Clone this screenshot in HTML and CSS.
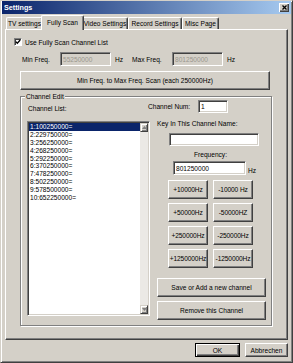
FILE: index.html
```html
<!DOCTYPE html>
<html lang="en">
  <head>
    <meta charset="utf-8" />
    <title>Settings</title>
    <meta name="viewport" content="width=device-width, initial-scale=1" />
    <link rel="stylesheet" href="styles.css">
  </head>
  <body>
    <div class="window">
      <div class="titlebar">
        <span class="title">Settings</span>
        <span class="close">
          <svg width="5" height="5" viewBox="0 0 5 5"><path d="M0.5 0.5 L4.5 4.5 M4.5 0.5 L0.5 4.5" stroke="#000" stroke-width="1.3"/></svg>
        </span>
      </div>

      <div class="tabs">
        <div class="tab tab-tv">TV settings</div>
        <div class="tab tab-scan active">Fully Scan</div>
        <div class="tab tab-video">Video Settings</div>
        <div class="tab tab-record">Record Settings</div>
        <div class="tab tab-misc">Misc Page</div>
      </div>

      <div class="panel">
        <div class="check-row">
          <span class="checkbox">
            <svg width="6" height="6" viewBox="0 0 6 6"><path d="M0.8 2.6 L2.3 4.2 L5.2 1" fill="none" stroke="#000" stroke-width="1.3"/></svg>
          </span>
          <span class="check-label">Use Fully Scan Channel List</span>
        </div>

        <div class="freq-row">
          <span class="freq-label">Min Freq.</span>
          <input class="field disabled min-input" type="text" value="55250000" disabled />
          <span class="hz">Hz</span>
          <span class="freq-label max-label">Max Freq.</span>
          <input class="field disabled max-input" type="text" value="801250000" disabled />
          <span class="hz">Hz</span>
        </div>

        <button class="btn scan-btn">Min Freq. to Max Freq. Scan (each 250000Hz)</button>

        <div class="group">
          <span class="legend">Channel Edit</span>

          <div class="list-col">
            <div class="list-label">Channel List:</div>
            <div class="listbox">
              <div class="items">
                <div class="item selected">1:100250000=</div>
                <div class="item">2:229750000=</div>
                <div class="item">3:256250000=</div>
                <div class="item">4:268250000=</div>
                <div class="item">5:292250000=</div>
                <div class="item">6:370250000=</div>
                <div class="item">7:478250000=</div>
                <div class="item">8:502250000=</div>
                <div class="item">9:578500000=</div>
                <div class="item">10:652250000=</div>
              </div>
              <div class="scrollbar">
                <span class="arrow">
                  <svg width="5" height="3" viewBox="0 0 5 3"><path d="M2.5 0 L5 3 L0 3 Z" fill="#808080"/></svg>
                </span>
                <span class="track"></span>
                <span class="arrow">
                  <svg width="5" height="3" viewBox="0 0 5 3"><path d="M0 0 L5 0 L2.5 3 Z" fill="#808080"/></svg>
                </span>
              </div>
            </div>
          </div>

          <div class="edit-col">
            <div class="num-row">
              <span class="num-label">Channel Num:</span>
              <input class="field num-input" type="text" value="1" />
            </div>
            <div class="name-label">Key In This Channel Name:</div>
            <input class="field name-input" type="text" value="" />
            <div class="freq-title">Frequency:</div>
            <div class="value-row">
              <input class="field value-input" type="text" value="801250000" />
              <span class="value-hz">Hz</span>
            </div>
            <div class="step-grid">
              <button class="btn step">+10000Hz</button>
              <button class="btn step">-10000 Hz</button>
              <button class="btn step">+50000Hz</button>
              <button class="btn step">-50000HZ</button>
              <button class="btn step">+250000Hz</button>
              <button class="btn step">-250000Hz</button>
              <button class="btn step">+1250000Hz</button>
              <button class="btn step">-1250000Hz</button>
            </div>
            <button class="btn wide save-btn">Save or Add a new channel</button>
            <button class="btn wide remove-btn">Remove this Channel</button>
          </div>
        </div>
      </div>

      <div class="footer">
        <button class="btn default ok-btn">OK</button>
        <button class="btn cancel-btn">Abbrechen</button>
      </div>
    </div>
  </body>
</html>
```

FILE: styles.css
```css
* {
  box-sizing: border-box;
}
body {
  margin: 0;
  background: #d4d0c8;
  font-family: 'Liberation Sans', Arial, sans-serif;
  font-size: 6.6px;
  color: #000;
}
button,
input {
  font-family: inherit;
  font-size: inherit;
  color: inherit;
  margin: 0;
  padding: 0;
  outline: none;
}
.window {
  width: 293px;
  height: 363px;
  border: 1px solid;
  border-color: #d4d0c8 #404040 #404040 #d4d0c8;
  box-shadow: inset 1px 1px #fff, inset -1px -1px #808080;
  padding: 0 1px 1px 1px;
  display: flex;
  flex-direction: column;
}
.titlebar {
  height: 13px;
  display: flex;
  align-items: center;
  padding: 0 2px 0 2px;
  background: linear-gradient(to right, #0a246a, #a6caf0);
  color: #fff;
  font-weight: bold;
  font-size: 7.2px;
}
.close {
  margin-left: auto;
  width: 10px;
  height: 9px;
  display: flex;
  align-items: center;
  justify-content: center;
  background: #d4d0c8;
  box-shadow: inset 1px 1px #fff, inset -1px -1px #404040, inset -2px -2px #808080;
}

/* tabs */
.tabs {
  height: 14px;
  margin-top: 1px;
  padding-left: 4px;
  display: flex;
  align-items: flex-end;
  position: relative;
  z-index: 1;
}
.tab {
  height: 12px;
  display: flex;
  align-items: center;
  justify-content: center;
  border: 1px solid;
  border-bottom: none;
  border-color: #fff #404040 #fff #fff;
  border-radius: 2px 2px 0 0;
  box-shadow: inset -1px 0 #808080;
  background: #d4d0c8;
  white-space: nowrap;
}
.tab-tv { width: 37px; }
.tab-scan { width: 43px; }
.tab-video { width: 46px; }
.tab-record { width: 54px; }
.tab-misc { width: 37px; }
.tab.active {
  height: 15px;
  margin: 0 -2px -1px -2px;
  padding-bottom: 2px;
  position: relative;
  z-index: 2;
}

/* panel */
.panel {
  margin-left: 3px;
  width: 283px;
  height: 311px;
  border: 1px solid;
  border-color: #fff #404040 #404040 #fff;
  box-shadow: inset -1px -1px #808080;
  padding: 8px 0 0 8px;
}
.check-row {
  height: 8px;
  display: flex;
  align-items: center;
}
.checkbox {
  width: 8px;
  height: 8px;
  display: flex;
  align-items: center;
  justify-content: center;
  background: #fff;
  border: 1px solid;
  border-color: #808080 #fff #fff #808080;
  box-shadow: inset 1px 1px #404040;
}
.check-label {
  margin-left: 3px;
}
.field {
  display: block;
  background: #fff;
  border: 1px solid;
  border-color: #808080 #fff #fff #808080;
  box-shadow: inset 1px 1px #404040, inset -1px -1px #d4d0c8;
  padding: 0 2px;
}
.field.disabled {
  background: #d4d0c8;
  color: #9a978f;
}
.freq-row {
  margin-top: 6px;
  padding-left: 8px;
  height: 14px;
  display: flex;
  align-items: center;
}
.freq-label { width: 38px; }
.max-label { width: 40px; }
.min-input,
.max-input {
  width: 51px;
  height: 14px;
}
.hz {
  margin-left: 4px;
  width: 17px;
}
.btn {
  display: flex;
  align-items: center;
  justify-content: center;
  background: #d4d0c8;
  border: 1px solid;
  border-color: #fff #404040 #404040 #fff;
  box-shadow: inset -1px -1px #808080;
  white-space: nowrap;
}
.scan-btn {
  margin: 5px 0 0 6px;
  width: 250px;
  height: 19px;
}

/* channel edit group */
.group {
  position: relative;
  margin: 6px 0 0 6px;
  width: 252px;
  height: 230px;
  border: 1px solid #808080;
  box-shadow: inset 1px 1px #fff, 1px 1px #fff;
  padding-top: 3px;
  display: flex;
}
.legend {
  position: absolute;
  top: -5px;
  left: 4px;
  padding: 0 1px;
  line-height: 9px;
  background: #d4d0c8;
}
.list-col {
  margin-left: 6px;
  width: 123px;
  padding-top: 4px;
}
.list-label {
  line-height: 10px;
  padding-left: 1px;
}
.listbox {
  margin-top: 7px;
  height: 195px;
  display: flex;
  background: #fff;
  border: 1px solid;
  border-color: #808080 #fff #fff #808080;
  box-shadow: inset 1px 1px #404040, inset -1px -1px #d4d0c8;
  padding: 1px;
}
.items {
  flex: 1;
}
.item {
  height: 7.9px;
  line-height: 7.9px;
  padding-left: 1px;
}
.item.selected {
  background: #0a246a;
  color: #fff;
}
.scrollbar {
  width: 8px;
  display: flex;
  flex-direction: column;
  background: #ebe9e5;
}
.arrow {
  height: 9px;
  display: flex;
  align-items: center;
  justify-content: center;
  background: #d4d0c8;
  border: 1px solid;
  border-color: #d4d0c8 #404040 #404040 #d4d0c8;
  box-shadow: inset 1px 1px #fff, inset -1px -1px #808080;
}
.track {
  flex: 1;
}
.edit-col {
  margin-left: -2px;
  display: flex;
  flex-direction: column;
  align-items: flex-start;
}
.num-row {
  height: 13px;
  display: flex;
  align-items: center;
}
.num-label { width: 50px; }
.num-input {
  width: 30px;
  height: 13px;
}
.name-label {
  margin: 6px 0 0 9px;
  line-height: 10px;
}
.name-input {
  margin: 4px 0 0 21px;
  width: 90px;
  height: 13px;
}
.freq-title {
  margin: 4px 0 0 46px;
  line-height: 10px;
}
.value-row {
  margin: 1px 0 0 25px;
  height: 14px;
  display: flex;
  align-items: flex-end;
}
.value-input {
  width: 73px;
  height: 14px;
}
.value-hz {
  margin-left: 2px;
  line-height: 8px;
}
.step-grid {
  margin: 5px 0 0 20px;
  display: grid;
  grid-template-columns: 40px 40px;
  grid-auto-rows: 19px;
  column-gap: 5px;
  row-gap: 4px;
}
.step {
  letter-spacing: -0.1px;
}
.wide {
  margin-left: 9px;
  width: 109px;
  height: 19px;
}
.save-btn { margin-top: 10px; }
.remove-btn { margin-top: 4px; }

/* footer */
.footer {
  margin-top: 3px;
  padding-right: 3px;
  display: flex;
  justify-content: flex-end;
  gap: 5px;
}
.ok-btn,
.cancel-btn {
  height: 14px;
}
.ok-btn { width: 45px; }
.cancel-btn { width: 43px; }
.btn.default {
  border: 1px solid #000;
  box-shadow: inset 1px 1px #fff, inset -1px -1px #404040, inset -2px -2px #808080;
}
```
